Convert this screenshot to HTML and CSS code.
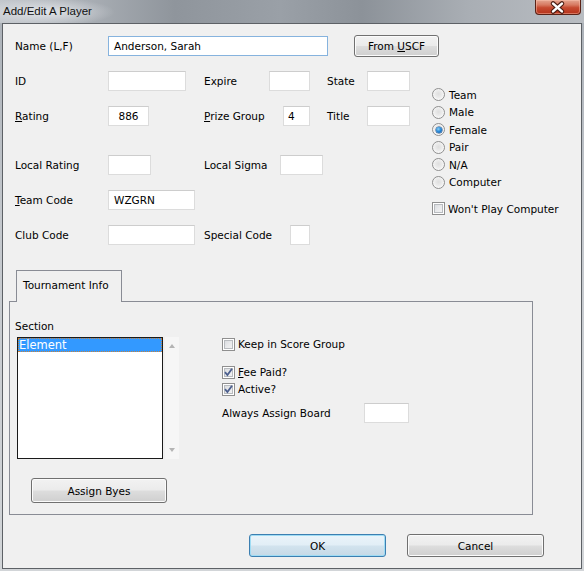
FILE: index.html
```html
<!DOCTYPE html>
<html>
<head>
<meta charset="utf-8">
<title>Add/Edit A Player</title>
<link rel="stylesheet" href="styles.css">
</head>
<body>
<div class="window">
  <div class="titlebar">
    <span class="title">Add/Edit A Player</span>
    <div class="close">
      <svg width="46" height="15" viewBox="0 0 46 15">
        <path d="M18.5 3.5 L27.5 11.5 M27.5 3.5 L18.5 11.5" stroke="#4a1c12" stroke-width="4.8" stroke-linecap="round" fill="none"/>
        <path d="M18.5 3.5 L27.5 11.5 M27.5 3.5 L18.5 11.5" stroke="#ffffff" stroke-width="2.6" stroke-linecap="round" fill="none"/>
      </svg>
    </div>
  </div>
  <div class="client">
    <div class="name-row">
      <span class="lbl w93">Name (L,F)</span>
      <div class="in focus w220">Anderson, Sarah</div>
      <div class="btn from"><span>From <u>U</u>SCF</span></div>
    </div>

    <div class="fields-area">
      <div class="fields">
        <div class="row">
          <div class="c1"><span class="lbl w93">ID</span><div class="in w78"></div></div>
          <div class="c2"><span class="lbl w65">Expire</span><div class="in w41"></div></div>
          <div class="c3"><span class="lbl w40">State</span><div class="in w43"></div></div>
        </div>
        <div class="row">
          <div class="c1"><span class="lbl w93"><u>R</u>ating</span><div class="in w41 center">886</div></div>
          <div class="c2"><span class="lbl w79"><u>P</u>rize Group</span><div class="in w27 p4">4</div></div>
          <div class="c3"><span class="lbl w40">Title</span><div class="in w43"></div></div>
        </div>
        <div class="row gap-big">
          <div class="c1"><span class="lbl w93">Local Rating</span><div class="in w43"></div></div>
          <div class="c2"><span class="lbl w76">Local Sigma</span><div class="in w43"></div></div>
        </div>
        <div class="row">
          <div class="c1"><span class="lbl w93"><u>T</u>eam Code</span><div class="in w87">WZGRN</div></div>
        </div>
        <div class="row">
          <div class="c1"><span class="lbl w93">Club Code</span><div class="in w87"></div></div>
          <div class="c2"><span class="lbl w86">Special Code</span><div class="in w20"></div></div>
        </div>
      </div>

      <div class="gender">
        <div class="radio-item"><span class="radio"></span><span>Team</span></div>
        <div class="radio-item"><span class="radio"></span><span>Male</span></div>
        <div class="radio-item"><span class="radio on"></span><span>Female</span></div>
        <div class="radio-item"><span class="radio"></span><span>Pair</span></div>
        <div class="radio-item"><span class="radio"></span><span>N/A</span></div>
        <div class="radio-item"><span class="radio"></span><span>Computer</span></div>
        <div class="check-item wont"><span class="cb"></span><span>Won't Play Computer</span></div>
      </div>
    </div>

    <div class="tabs">
      <div class="tab">Tournament Info</div>
      <div class="panel">
        <div class="panel-left">
          <div class="section-lbl">Section</div>
          <div class="list-row">
            <div class="listbox">
              <div class="list-item sel">Element</div>
            </div>
            <div class="scroll">
              <span class="arrow up"></span>
              <span class="arrow down"></span>
            </div>
          </div>
          <div class="btn byes">Assign Byes</div>
        </div>
        <div class="panel-right">
          <div class="check-item keep"><span class="cb"></span><span>Keep in Score Group</span></div>
          <div class="check-item fee"><span class="cb"><svg width="11" height="11" viewBox="0 0 11 11"><path d="M2 5.2 L4.4 8 L9 1.8" stroke="#4c5f8e" stroke-width="1.8" fill="none"/></svg></span><span><u>F</u>ee Paid?</span></div>
          <div class="check-item active"><span class="cb"><svg width="11" height="11" viewBox="0 0 11 11"><path d="M2 5.2 L4.4 8 L9 1.8" stroke="#4c5f8e" stroke-width="1.8" fill="none"/></svg></span><span>Active?</span></div>
          <div class="board-row"><span class="lbl w142">Always Assign Board</span><div class="in w45"></div></div>
        </div>
      </div>
    </div>

    <div class="footer">
      <div class="btn dlg default">OK</div>
      <div class="btn dlg">Cancel</div>
    </div>
  </div>
</div>
</body>
</html>
```

FILE: styles.css
```css
html, body {
  margin: 0;
  padding: 0;
}

body {
  font-family: "DejaVu Sans", "Liberation Sans", sans-serif;
  font-size: 10.5px;
  color: #000;
}

.window {
  width: 584px;
  height: 571px;
  box-sizing: border-box;
  padding: 0 2px 2px 2px;
  background: linear-gradient(to bottom, #aab0b7 0%, #c4c8cd 40%, #d2d5d8 100%);
  display: flex;
  flex-direction: column;
  overflow: hidden;
}

.titlebar {
  height: 23px;
  margin: 0 -2px;
  display: flex;
  align-items: flex-start;
  background:
    radial-gradient(ellipse 70px 14px at 45px 12px, rgba(230, 233, 237, 0.9), rgba(230, 233, 237, 0) 100%),
    linear-gradient(to right, #c3c7cc 0%, #aeb3b9 12%, #8f959c 30%, #9aa0a7 48%, #8c9299 62%, #a9aeb4 80%, #b9bdc2 100%);
}

.title {
  font-family: "Liberation Sans", "DejaVu Sans", sans-serif;
  font-size: 11.5px;
  color: #111;
  padding-left: 3px;
  line-height: 22px;
}

.close {
  margin-left: auto;
  margin-right: 3px;
  width: 46px;
  height: 15px;
  box-sizing: border-box;
  border: 1px solid #5a2216;
  border-top: none;
  border-radius: 0 0 4px 4px;
  background: linear-gradient(to bottom, #e4a590 0%, #d77a62 35%, #c64a30 55%, #b5331b 100%);
  box-shadow: inset 0 0 0 1px rgba(255, 200, 180, 0.45);
  display: flex;
  align-items: center;
  justify-content: center;
}

.close svg {
  display: block;
  margin-left: -1px;
}

.client {
  flex: 1;
  border: 1px solid #5d6166;
  background: #f0f0f0;
  display: flex;
  flex-direction: column;
}

.lbl {
  display: inline-block;
  flex: none;
  white-space: nowrap;
}

.w93 { width: 93px; }
.w65 { width: 65px; }
.w79 { width: 79px; }
.w76 { width: 76px; }
.w86 { width: 86px; }
.w40 { width: 40px; }
.w142 { width: 142px; }

.in {
  flex: none;
  height: 20px;
  box-sizing: border-box;
  background: #fff;
  border: 1px solid #dcdcdc;
  border-top-color: #cdcdcd;
  padding: 0 5px;
  line-height: 18px;
  white-space: nowrap;
  overflow: hidden;
}

.in.focus {
  border-color: #86b3de;
}

.in.center { text-align: center; padding: 0; }
.in.p4 { padding-left: 4px; }

.w220 { width: 220px; }
.w78 { width: 78px; }
.w41 { width: 41px; }
.w43 { width: 43px; }
.w27 { width: 27px; }
.w87 { width: 87px; }
.w20 { width: 20px; }
.w45 { width: 45px; }

.btn {
  box-sizing: border-box;
  border: 1px solid #707070;
  border-radius: 3px;
  background: linear-gradient(to bottom, #f2f2f2 0%, #ebebeb 48%, #dddddd 52%, #cfcfcf 100%);
  box-shadow: inset 0 0 0 1px #fbfbfb;
  display: flex;
  align-items: center;
  justify-content: center;
  white-space: nowrap;
  flex: none;
}

.name-row {
  margin-top: 11px;
  padding-left: 12px;
  height: 22px;
  display: flex;
  align-items: center;
}

.from {
  margin-left: 26px;
  width: 85px;
  height: 22px;
}

.fields-area {
  margin-top: 14px;
  padding-left: 12px;
  display: flex;
}

.fields {
  width: 417px;
  flex: none;
  display: flex;
  flex-direction: column;
}

.row {
  height: 20px;
  display: flex;
  align-items: center;
  margin-top: 15px;
}

.row:first-child { margin-top: 0; }
.row.gap-big { margin-top: 29px; }

.c1 { width: 189px; display: flex; align-items: center; flex: none; }
.c2 { width: 123px; display: flex; align-items: center; flex: none; }
.c3 { display: flex; align-items: center; flex: none; }

.gender {
  margin-top: 15px;
  display: flex;
  flex-direction: column;
}

.radio-item {
  height: 17.5px;
  display: flex;
  align-items: center;
  white-space: nowrap;
}

.radio {
  width: 13px;
  height: 13px;
  box-sizing: border-box;
  border-radius: 50%;
  border: 1px solid #8f8f8f;
  background: radial-gradient(circle at 50% 45%, #dedede 0%, #ececec 45%, #fafafa 75%, #ffffff 100%);
  margin-right: 4px;
  position: relative;
  flex: none;
}

.radio.on::after {
  content: "";
  position: absolute;
  left: 2.5px;
  top: 2.5px;
  width: 6px;
  height: 6px;
  border-radius: 50%;
  background: radial-gradient(circle at 40% 35%, #8fd2f5 0%, #2a8ad8 45%, #0f4f9c 100%);
  box-shadow: 0 0 0 0.5px #1b4d86;
}

.check-item {
  height: 17px;
  display: flex;
  align-items: center;
  white-space: nowrap;
}

.cb {
  width: 13px;
  height: 13px;
  box-sizing: border-box;
  border: 1px solid #8f8f8f;
  background: linear-gradient(135deg, #d3d6da 0%, #e8e9eb 50%, #f6f6f6 100%);
  box-shadow: inset 0 0 0 1px #ffffff, inset 0 0 0 2px #b8bbbf;
  margin-right: 3px;
  flex: none;
  display: flex;
  align-items: center;
  justify-content: center;
}

.cb svg { display: block; }

.wont { margin-top: 9px; }

.tabs {
  margin-top: 25px;
  margin-left: 6px;
  display: flex;
  flex-direction: column;
  align-items: flex-start;
}

.tab {
  margin-left: 7px;
  width: 106px;
  height: 32px;
  box-sizing: border-box;
  border: 1px solid #898c95;
  border-bottom: none;
  background: #f0f0f0;
  padding-left: 6px;
  line-height: 29px;
  margin-bottom: -1px;
  position: relative;
  z-index: 1;
  white-space: nowrap;
}

.panel {
  width: 524px;
  height: 214px;
  box-sizing: border-box;
  border: 1px solid #898c95;
  display: flex;
}

.panel-left {
  width: 212px;
  flex: none;
  box-sizing: border-box;
  padding-left: 5px;
  display: flex;
  flex-direction: column;
}

.section-lbl {
  margin-top: 17px;
  line-height: 14px;
}

.list-row {
  margin-top: 4px;
  margin-left: 2px;
  display: flex;
}

.listbox {
  width: 146px;
  height: 122px;
  box-sizing: border-box;
  border: 1px solid #1a1a1a;
  background: #fff;
}

.list-item {
  height: 14px;
  line-height: 14px;
  padding-left: 1px;
}

.list-item.sel {
  background: #3399ff;
  color: #fff;
  outline: 1px dotted #c8823a;
  outline-offset: -1px;
  font-size: 11.5px;
}

.scroll {
  margin-left: 2px;
  width: 14px;
  height: 122px;
  background: #f6f6f6;
  display: flex;
  flex-direction: column;
  align-items: center;
  justify-content: space-between;
  padding: 7px 0;
  box-sizing: border-box;
}

.arrow {
  width: 0;
  height: 0;
  border-left: 3.5px solid transparent;
  border-right: 3.5px solid transparent;
}

.arrow.up { border-bottom: 4px solid #b4b4b4; }
.arrow.down { border-top: 4px solid #b4b4b4; }

.byes {
  margin-top: 19px;
  margin-left: 16px;
  width: 136px;
  height: 25px;
}

.panel-right {
  display: flex;
  flex-direction: column;
}

.keep { margin-top: 34px; height: 16px; }
.fee { margin-top: 12px; height: 16px; }
.active { margin-top: 1px; height: 16px; }

.board-row {
  margin-top: 6px;
  display: flex;
  align-items: center;
}

.footer {
  margin-top: 19px;
  padding-right: 37px;
  display: flex;
  justify-content: flex-end;
  gap: 21px;
}

.dlg {
  width: 137px;
  height: 23px;
}

.dlg.default {
  border-color: #3c7fb1;
  box-shadow: inset 0 0 0 1px #9fdcf4;
  background: linear-gradient(to bottom, #eaf4fa 0%, #e2eef6 48%, #d2e3ee 52%, #c6d9e6 100%);
}
```
